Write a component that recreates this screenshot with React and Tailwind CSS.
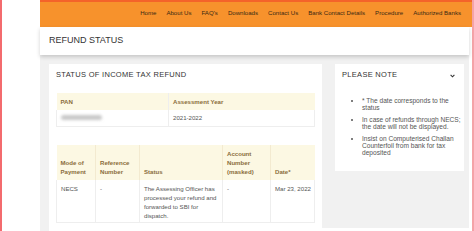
import React from "react";

const font = { fontFamily: '"Liberation Sans", Arial, sans-serif' };

export default function App() {
  const nav = ["Home", "About Us", "FAQ's", "Downloads", "Contact Us", "Bank Contact Details", "Procedure", "Authorized Banks"];
  return (
    <div className="flex w-[474px] h-[231px] overflow-hidden bg-white" style={font}>
      <div className="w-[2px] bg-[#f36b6e] shrink-0" />
      <div className="w-[38px] shrink-0 bg-white" />
      <div className="flex-1 flex flex-col min-w-0">
        <div className="h-[27px] shrink-0 bg-[#f7922c] border-t-[2px] border-[#f4632a] flex items-center justify-end gap-[10px] pr-[11px] text-[6.1px] text-[#3b2a14] pb-[3px]">
          {nav.map((n) => (
            <span key={n}>{n}</span>
          ))}
        </div>
        <div className="relative z-10 h-[28px] shrink-0 bg-white flex items-center pl-[9px] text-[9px] text-[#333] shadow-[0_2px_4px_rgba(0,0,0,0.18)] mr-[3px]">
          REFUND STATUS
        </div>
        <div className="flex-1 flex bg-[#f1f1f1] pt-[9px] pl-[9px] mr-[3px] min-h-0">
          <div className="w-[273px] shrink-0 bg-white px-[7px] pt-[5px]">
            <div className="text-[7.5px] leading-[12px] tracking-[0.3px] text-[#333] mb-[12px]">STATUS OF INCOME TAX REFUND</div>
            <table className="w-[258px] border-collapse text-[6.1px] leading-[9px] table-fixed">
              <colgroup>
                <col className="w-[112px]" />
                <col className="w-[146px]" />
              </colgroup>
              <thead>
                <tr className="bg-[#fcf8e3] text-[#8a6d3b] h-[17px]">
                  <th className="text-left font-semibold px-[4px] border-r border-[#eee]">PAN</th>
                  <th className="text-left font-semibold px-[4px]">Assessment Year</th>
                </tr>
              </thead>
              <tbody>
                <tr className="h-[16px] text-[#555] border-b border-[#eee]">
                  <td className="px-[4px] border-l border-r border-[#eee]">
                    <div className="w-[41px] h-[5px] rounded bg-[#c8c8c8] blur-[1.5px]" />
                  </td>
                  <td className="px-[4px] border-r border-[#eee]">2021-2022</td>
                </tr>
              </tbody>
            </table>
            <table className="w-[258px] mt-[18px] border-collapse text-[6.1px] leading-[9px] table-fixed">
              <colgroup>
                <col className="w-[39px]" />
                <col className="w-[44px]" />
                <col className="w-[83px]" />
                <col className="w-[48px]" />
                <col className="w-[44px]" />
              </colgroup>
              <thead>
                <tr className="bg-[#fcf8e3] text-[#8a6d3b] h-[35px]">
                  <th className="text-left align-bottom font-semibold px-[4px] pb-[4px] border-r border-[#f3ead0]">Mode of<br />Payment</th>
                  <th className="text-left align-bottom font-semibold px-[4px] pb-[4px] border-r border-[#f3ead0]">Reference<br />Number</th>
                  <th className="text-left align-bottom font-semibold px-[4px] pb-[4px] border-r border-[#f3ead0]">Status</th>
                  <th className="text-left align-bottom font-semibold px-[4px] pb-[4px] border-r border-[#f3ead0]">Account<br />Number<br />(masked)</th>
                  <th className="text-left align-bottom font-semibold px-[4px] pb-[4px]">Date*</th>
                </tr>
              </thead>
              <tbody>
                <tr className="h-[43px] text-[#555] align-top border-b border-[#eee]">
                  <td className="px-[4px] pt-[4px] border-l border-r border-[#eee]">NECS</td>
                  <td className="px-[4px] pt-[4px] border-r border-[#eee]">-</td>
                  <td className="px-[4px] pt-[4px] border-r border-[#eee]">The Assessing Officer has processed your refund and forwarded to SBI for dispatch.</td>
                  <td className="px-[4px] pt-[4px] border-r border-[#eee]">-</td>
                  <td className="pl-[4px] pr-0 pt-[4px] border-r border-[#eee] whitespace-nowrap">Mar 23, 2022</td>
                </tr>
              </tbody>
            </table>
          </div>
          <div className="flex-1 flex flex-col pl-[13px] pr-[5px]">
            <div className="bg-white h-[107px] pt-[5px]">
              <div className="flex items-center justify-between pl-[7px] pr-[9px] h-[12px]">
                <span className="text-[7.5px] tracking-[0.3px] text-[#333]">PLEASE NOTE</span>
                <svg width="5" height="4" viewBox="0 0 5 4" className="mt-[2px]">
                  <path d="M0.6 0.8 L2.5 2.8 L4.4 0.8" fill="none" stroke="#333" strokeWidth="1.1" />
                </svg>
              </div>
              <ul className="list-disc pl-[27px] pr-[2px] mt-[17px] text-[6.6px] leading-[6.8px] text-[#555] marker:text-[#555]">
                <li className="mb-[5.5px]">* The date corresponds to the status</li>
                <li className="mb-[5.5px]">In case of refunds through NECS; the date will not be displayed.</li>
                <li>Insist on Computerised Challan Counterfoil from bank for tax deposited</li>
              </ul>
            </div>
            <div className="flex-1" />
            <div className="h-[3px] bg-white -mr-[5px] -ml-[13px]" />
          </div>
        </div>
      </div>
      <div className="w-[2px] bg-[#f5a3a8] shrink-0" />
    </div>
  );
}
